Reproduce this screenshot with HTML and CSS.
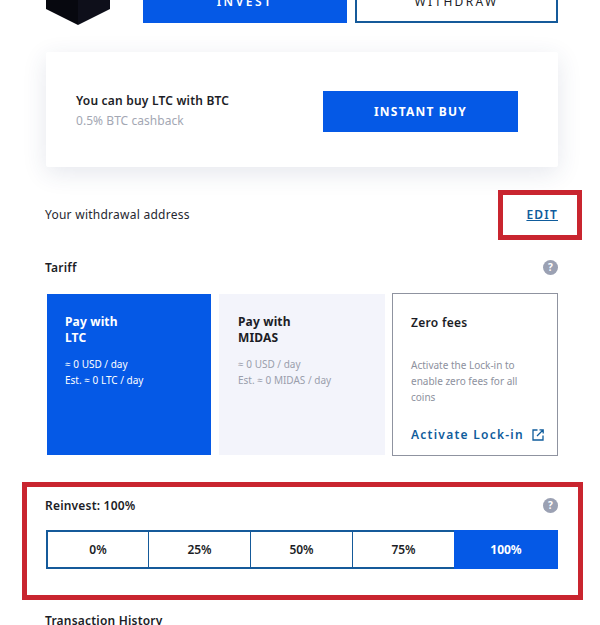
FILE: index.html
```html
<!DOCTYPE html>
<html lang="en">
<head>
<meta charset="utf-8">
<title>Invest</title>
<link rel="stylesheet" href="styles.css">
</head>
<body>
<main class="page">
  <section class="top-row">
    <svg class="logo" width="64" height="64" viewBox="0 0 64 64" aria-hidden="true">
      <polygon points="0,48 32,64 32,20 0,20" fill="#07080f"/>
      <polygon points="64,48 32,64 32,20 64,20" fill="#0e0f1a"/>
    </svg>
    <div class="top-actions">
      <a class="btn btn-solid">INVEST</a>
      <a class="btn btn-outline">WITHDRAW</a>
    </div>
  </section>

  <section class="buy-card">
    <div class="buy-copy">
      <div class="buy-title">You can buy LTC with BTC</div>
      <div class="buy-sub">0.5% BTC cashback</div>
    </div>
    <a class="instant">INSTANT BUY</a>
  </section>

  <section class="address-row">
    <span class="address-label">Your withdrawal address</span>
    <a class="edit">EDIT</a>
  </section>

  <section class="heading-row tariff-head">
    <h2 class="heading">Tariff</h2>
    <span class="help">?</span>
  </section>

  <section class="tariffs">
    <article class="tariff tariff-active">
      <h3 class="tariff-title">Pay with<br>LTC</h3>
      <p class="tariff-line">≈ 0 USD / day</p>
      <p class="tariff-line">Est. ≈ 0 LTC / day</p>
    </article>
    <article class="tariff tariff-muted">
      <h3 class="tariff-title">Pay with<br>MIDAS</h3>
      <p class="tariff-line">≈ 0 USD / day</p>
      <p class="tariff-line">Est. ≈ 0 MIDAS / day</p>
    </article>
    <article class="tariff tariff-zero">
      <h3 class="zero-title">Zero fees</h3>
      <p class="zero-text">Activate the Lock-in to enable zero fees for all coins</p>
      <a class="lock-link">Activate Lock-in
        <svg class="ext" width="12" height="12" viewBox="0 0 12 12" aria-hidden="true">
          <path d="M5.5 1H1v10h10V6.5M7.5 .8h3.7v3.7M11 1 5 7" fill="none" stroke="#0f5c9c" stroke-width="1.3"/>
        </svg>
      </a>
    </article>
  </section>

  <section class="heading-row reinvest-head">
    <h2 class="heading">Reinvest: 100%</h2>
    <span class="help">?</span>
  </section>

  <section class="segments">
    <div class="segment">0%</div>
    <div class="segment">25%</div>
    <div class="segment">50%</div>
    <div class="segment">75%</div>
    <div class="segment segment-on">100%</div>
  </section>

  <h2 class="heading history">Transaction History</h2>

  <div class="mark mark-edit"></div>
  <div class="mark mark-reinvest"></div>
</main>
</body>
</html>
```

FILE: styles.css
```css
* { box-sizing: border-box; }
html, body { margin: 0; height: 625px; overflow: hidden; background: #fff; }
body { font-family: "Noto Sans", "Open Sans", sans-serif; color: #1c1d26; }
.page { position: relative; width: 600px; height: 625px; padding: 0 42px 0 46px; overflow: hidden; }
h2, h3, p { margin: 0; }

.top-row { display: flex; margin-top: -39px; height: 64px; }
.logo { flex: none; display: block; }
.top-actions { display: grid; grid-template-columns: 204px 203px; column-gap: 8px; margin-left: 33px; height: 62px; }
.btn { display: flex; align-items: flex-end; justify-content: center; padding-bottom: 13px; font-size: 12px; font-weight: 600; letter-spacing: 2.5px; line-height: 16px; }
.btn-solid { background: #0559e6; color: #fff; }
.btn-outline { border: 2px solid #155a9a; color: #1c1d26; padding-bottom: 11px; font-weight: 400; letter-spacing: 2.3px; }

.buy-card { display: flex; align-items: center; justify-content: space-between; height: 115px; margin-top: 27px; padding: 3px 40px 0 30px; background: #fff; box-shadow: 0 6px 24px rgba(40, 60, 110, .12); border-radius: 2px; }
.buy-copy { margin-top: -1px; }
.buy-title { font-size: 12px; font-weight: 600; line-height: 16px; letter-spacing: .2px; }
.buy-sub { margin-top: 4px; font-size: 12px; line-height: 16px; color: #a3a7b3; letter-spacing: .05px; }
.instant { display: flex; align-items: center; justify-content: center; width: 195px; height: 41px; margin-top: 1px; background: #0559e6; color: #fff; font-size: 12px; font-weight: 700; letter-spacing: 1.2px; }

.address-row { display: flex; justify-content: space-between; align-items: center; margin-top: 37px; height: 20px; }
.address-label { margin-left: -1px; font-size: 12px; letter-spacing: .25px; color: #262730; }
.edit { font-size: 12px; font-weight: 600; letter-spacing: 1.2px; color: #0f5c9c; text-decoration: underline; }

.heading-row { display: flex; justify-content: space-between; align-items: center; height: 18px; }
.tariff-head { margin-top: 35px; }
.heading { margin-left: -1px; font-size: 12px; font-weight: 600; line-height: 18px; letter-spacing: .2px; }
.help { display: flex; align-items: center; justify-content: center; width: 15px; height: 15px; margin-bottom: 2px; border-radius: 50%; background: #9ba1b3; color: #fff; font-size: 10px; font-weight: 700; line-height: 1; }

.tariffs { display: grid; grid-template-columns: 164px 166px 166px; column-gap: 8px; margin-top: 17px; height: 161px; padding-left: 1px; }
.tariff { padding: 20px 18px 0; }
.tariff-active { background: #0559e6; color: #fff; }
.tariff-muted { background: #f3f4fb; color: #1c1d26; padding-left: 19px; }
.tariff-title { font-size: 12px; font-weight: 700; line-height: 16px; letter-spacing: .15px; margin-bottom: 10px; }
.tariff-line { font-size: 10px; line-height: 16px; }
.tariff-muted .tariff-line { color: #9a9eac; }
.tariff-zero { display: flex; flex-direction: column; margin: -1px 1px -1px -1px; border: 1px solid #8f93a0; padding-top: 21px; }
.zero-title { font-size: 12px; font-weight: 600; line-height: 16px; letter-spacing: .3px; }
.zero-text { margin-top: 26px; font-size: 10px; line-height: 16px; color: #8d919e; }
.lock-link { display: flex; align-items: center; gap: 8px; margin: 22px -6px 0 0; font-size: 12px; font-weight: 600; letter-spacing: 1.25px; line-height: 16px; color: #0f5c9c; white-space: nowrap; }
.ext { flex: none; }

.reinvest-head { margin-top: 42px; }
.segments { display: grid; grid-template-columns: repeat(4, 102px) 1fr; margin-top: 15px; height: 39px; }
.segment { display: flex; align-items: center; justify-content: center; font-size: 12px; font-weight: 600; border: 2px solid #155a9a; border-width: 2px 0 2px 1px; }
.segment:first-child { border-left-width: 2px; }
.segment-on { background: #0559e6; color: #fff; font-weight: 700; border: 0; }

.history { margin-top: 43px; }

.mark { position: absolute; border: 5px solid #c9252f; }
.mark-edit { left: 498px; top: 190px; width: 84px; height: 50px; }
.mark-reinvest { left: 22px; top: 482px; width: 561px; height: 118px; }
```
